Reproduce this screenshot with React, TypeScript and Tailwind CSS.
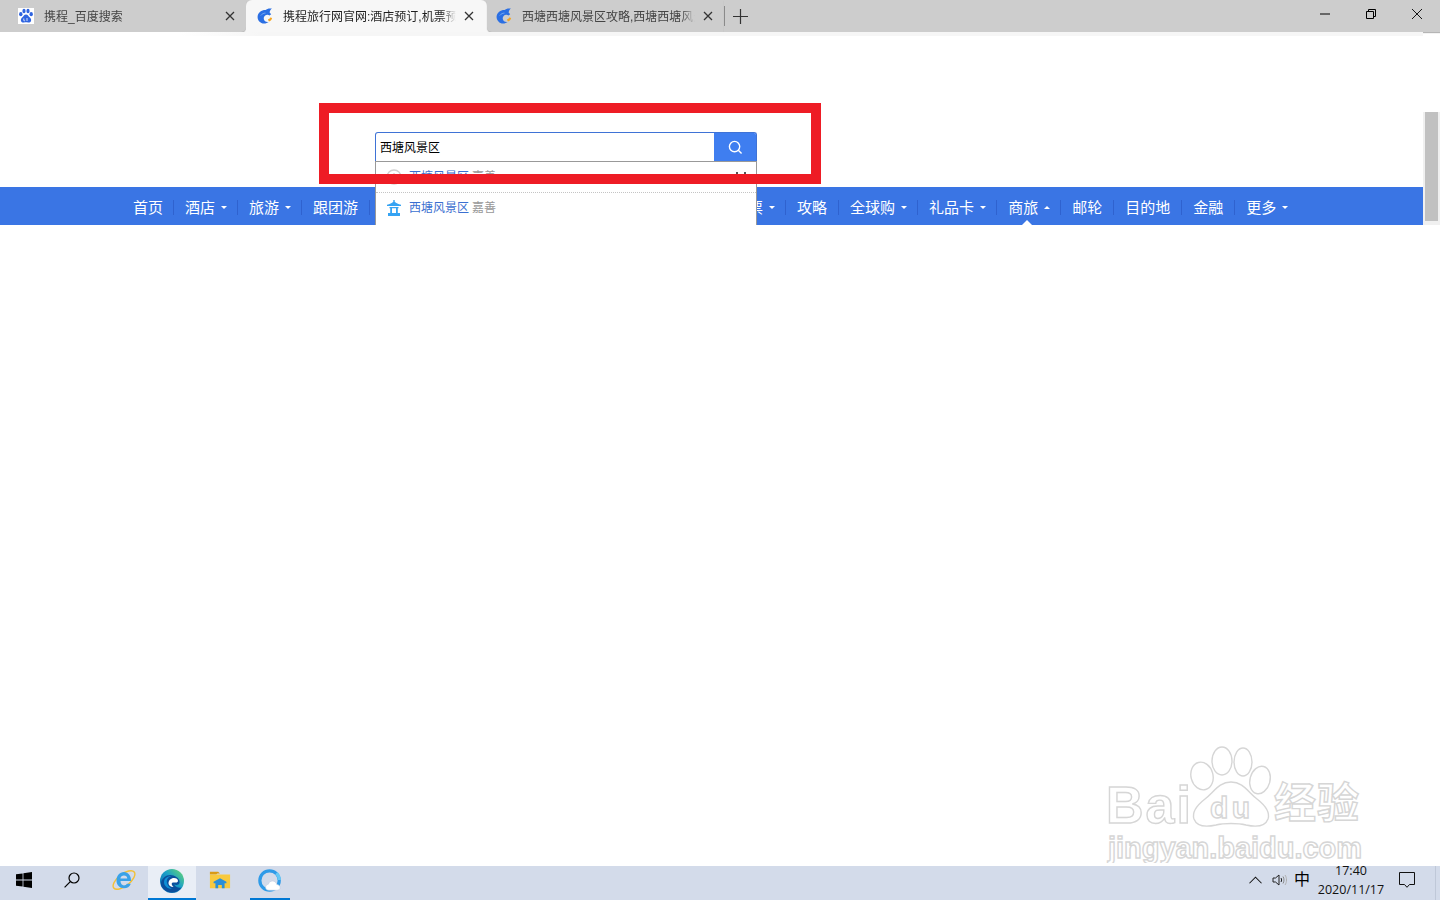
import React from "react";

const FONT = { fontFamily: '"Liberation Sans","Noto Sans CJK SC",sans-serif' };

function Paw({ className }: { className?: string }) {
  return (
    <svg viewBox="0 0 16 16" className={className}>
      <rect width="16" height="16" fill="#fff" />
      <g fill="#2f64e0">
        <ellipse cx="2.8" cy="6.2" rx="1.7" ry="2.1" />
        <ellipse cx="6" cy="3" rx="1.6" ry="2.2" />
        <ellipse cx="10" cy="3" rx="1.6" ry="2.2" />
        <ellipse cx="13.2" cy="6.2" rx="1.7" ry="2.1" />
        <path d="M8 6.5c-2 0-2.4 1.8-3.6 2.8C3.2 10.3 2.5 11.5 3 13c.5 1.4 2 1.8 3 1.5 1.3-.3 2.700-.3 4 0 1 .3 2.500-.1 3-1.500.5-1.500-.2-2.700-1.400-3.700C10.400 8.300 10 6.500 8 6.500z" />
      </g>
      <path d="M5.8 10.500v1.800c0 .8 1 .8 1 0M9 10v3" stroke="#fff" strokeWidth=".8" fill="none" />
    </svg>
  );
}

function Dolphin({ className }: { className?: string }) {
  return (
    <svg viewBox="0 0 16 16" className={className}>
      <path
        d="M15 .5C11.800.1 9.800.8 8.600 2 4.800 1.800 1 4.600.6 8.400c-.3 3.800 2.700 7 6.500 7.100 1.800 0 3.400-.6 4.500-1.500-2.600.4-4.400-.9-4.800-3-.4-2.100 1-4 3.300-4.200 1-.1 1.700.2 2.300.7l1.800-1.200-1.600-1.800c.3-1.700.9-3 2.400-4z"
        fill="#2b6fe3"
      />
      <path d="M3.800 7.500c1.200-1.600 2.800-2.400 4.700-2.400" stroke="#7fb0f5" strokeWidth=".8" fill="none" />
      <path d="M11 11.200c1.300-.2 2.200-1 2.500-2 .5.400 1 .7 1.600.8-.3 1.700-1.500 3.100-3.100 3.500-.5-.6-.9-1.400-1-2.300z" fill="#f6a623" />
    </svg>
  );
}

function X({ className }: { className?: string }) {
  return (
    <svg viewBox="0 0 10 10" className={className} fill="none" stroke="currentColor" strokeWidth="1.300">
      <path d="M1 1l8 8M9 1L1 9" />
    </svg>
  );
}

function Tab({
  title,
  icon,
  active,
  w,
  pl,
  extra,
}: {
  title: string;
  icon: React.ReactNode;
  active?: boolean;
  w: string;
  pl: string;
  extra: string;
}) {
  return (
    <div className={`flex h-full items-center ${w} ${pl} ${extra} ${active ? "text-[#1f1f1f]" : "text-[#444444]"}`}>
      <span className="mr-[10px] w-[16px] shrink-0">{icon}</span>
      <span className="w-[173px] shrink-0 overflow-hidden whitespace-nowrap pt-[1px] text-[12px] leading-[16px] [mask-image:linear-gradient(to_right,#000_92%,transparent)]">
        {title}
      </span>
      <X className="ml-[8px] h-[10px] w-[10px] shrink-0 text-[#333333]" />
    </div>
  );
}

function Item({ label, caret, up }: { label: string; caret?: boolean; up?: boolean }) {
  return (
    <div className="relative flex h-full items-center">
      <span className="mt-[2px] h-[15px] w-px bg-[#2f62cf]" />
      <span className="whitespace-nowrap pl-[11px] pt-[4px] text-[15px] leading-[20px] text-white">{label}</span>
      {caret && (
        <span
          className={`ml-[6px] mr-[-1px] mt-[2px] h-0 w-0 border-x-[3px] border-x-transparent ${
            up ? "border-b-[3px] border-b-white" : "border-t-[3px] border-t-white"
          }`}
        />
      )}
      <span className="pr-[11px]" />
      {up && (
        <span className="absolute bottom-0 left-[26px] h-0 w-0 border-x-[5px] border-b-[5px] border-x-transparent border-b-white" />
      )}
    </div>
  );
}

function Watermark() {
  const common = { fill: "#ffffff", stroke: "#d6d6d6", strokeWidth: 1.4, fontWeight: 700 };
  return (
    <svg viewBox="0 0 290 128" className="pointer-events-none absolute left-[1090px] top-[735px] z-10 h-[128px] w-[290px]">
      <text x="16" y="88" fontSize="52" fontFamily="Liberation Sans" textLength="85" {...common}>
        Bai
      </text>
      <g fill="#ffffff" stroke="#d6d6d6" strokeWidth="1.400">
        <ellipse cx="112" cy="41" rx="11" ry="14" transform="rotate(-15 112 41)" />
        <ellipse cx="132" cy="26" rx="10" ry="14" />
        <ellipse cx="153" cy="27" rx="9" ry="14" />
        <ellipse cx="170" cy="45" rx="10" ry="14" transform="rotate(15 170 45)" />
        <path d="M141 47c-12 0-17 10-26 17-9 7-13 14-11 20 3 8 13 8 22 6 8-2 22-2 30 0 9 2 19 2 22-6 2-6-2-13-11-20-9-7-14-17-26-17z" />
      </g>
      <text x="120" y="83" fontSize="30" fontFamily="Liberation Sans" textLength="40" {...common}>
        du
      </text>
      <text x="184" y="83" fontSize="42" fontFamily="Noto Sans CJK SC" textLength="85" {...common}>
        经验
      </text>
      <text x="18" y="123" fontSize="29" fontFamily="Liberation Sans" textLength="254" {...common}>
        jingyan.baidu.com
      </text>
    </svg>
  );
}

export default function App() {
  return (
    <div className="relative flex h-screen w-full flex-col overflow-hidden bg-white" style={FONT}>
      {/* browser tab bar */}
      <div className="flex h-[32px] shrink-0 bg-[linear-gradient(#cdcdcd_50%,#f7f7f7_50%)]">
        <Tab
          title="携程_百度搜索"
          w="w-[246px]"
          pl="pl-[18px]"
          extra="rounded-br-[5px] bg-[#cdcdcd] shadow-[0_1px_1px_#b5b5b5]"
          icon={<Paw className="h-[16px] w-[16px]" />}
        />
        <Tab
          active
          title="携程旅行网官网:酒店预订,机票预订查询"
          w="w-[241px]"
          pl="pl-[11px]"
          extra="rounded-t-[6px] bg-[#f7f7f7]"
          icon={<Dolphin className="h-[16px] w-[16px]" />}
        />
        <Tab
          title="西塘西塘风景区攻略,西塘西塘风景区门票"
          w="w-[237px]"
          pl="pl-[9px]"
          extra="rounded-bl-[5px] bg-[#cdcdcd] shadow-[0_1px_1px_#b5b5b5]"
          icon={<Dolphin className="h-[16px] w-[16px]" />}
        />
        <div className="flex flex-1 items-center bg-[#cdcdcd] shadow-[0_1px_1px_#b5b5b5]">
          <span className="h-[20px] w-px bg-[#8a8a8a]" />
          <svg viewBox="0 0 15 15" className="ml-[8px] h-[15px] w-[15px]" stroke="#333" strokeWidth="1.200">
            <path d="M7.500 0v15M0 7.500h15" />
          </svg>
          <div className="ml-auto flex h-full items-center pb-[4px] pr-[18px] text-black">
            <svg viewBox="0 0 10 10" className="mr-[36px] h-[10px] w-[10px]" stroke="#000" strokeWidth="1">
              <path d="M0 5h10" />
            </svg>
            <svg viewBox="0 0 10 10" className="mr-[36px] h-[10px] w-[10px]" fill="none" stroke="#000" strokeWidth="1">
              <path d="M.5 2.500h7v7h-7zM2.500 2.500V.5h7v7h-2" />
            </svg>
            <svg viewBox="0 0 10 10" className="h-[10px] w-[10px]" fill="none" stroke="#000" strokeWidth=".9">
              <path d="M0 0l10 10M10 0L0 10" />
            </svg>
          </div>
        </div>
      </div>

      {/* page */}
      <div className="flex min-h-0 flex-1">
        <div className="relative flex-1">
          <div className="h-[4px] bg-[linear-gradient(to_right,#ffffff_180px,#f6f6f6_260px)]" />
          <div className="relative h-[151px]">
            <div className="absolute left-[375px] top-[96px] z-10 w-[382px]">
              <div className="flex h-[29px] overflow-hidden rounded-t-[3px] border border-b-0 border-[#3f73d6]">
                <div className="flex-1 pl-[4px] text-[12px] leading-[30px] text-black">西塘风景区</div>
                <div className="flex w-[42px] items-center justify-center bg-[#3f7ef0]">
                  <svg viewBox="0 0 16 16" className="h-[15px] w-[15px]" fill="none" stroke="#fff" strokeWidth="1.500">
                    <circle cx="7" cy="7" r="5.500" />
                    <path d="M11 11l3.500 3.500" />
                  </svg>
                </div>
              </div>
              <div className="h-[64px] border border-b-0 border-[#999999] bg-white">
                <div className="flex h-[31px] items-center border-b border-dotted border-[#c4c4c4] pl-[10px] pr-[10px]">
                  <svg viewBox="0 0 16 16" className="mr-[7px] h-[16px] w-[16px]" fill="none" stroke="#cfcfcf" strokeWidth="1.300">
                    <circle cx="8" cy="8" r="7" />
                    <path d="M8 4v4" />
                  </svg>
                  <span className="text-[12px] text-[#3b6fd0]">西塘风景区</span>
                  <span className="ml-[3px] text-[12px] text-[#999999]">嘉善</span>
                  <span className="ml-auto flex -translate-y-[1px] gap-[6px]">
                    <span className="h-[8px] w-[2px] bg-[#555555]" />
                    <span className="h-[8px] w-[2px] bg-[#555555]" />
                  </span>
                </div>
                <div className="flex h-[32px] items-center pb-[3px] pl-[10px]">
                  <svg viewBox="0 0 16 16" className="mr-[7px] h-[16px] w-[16px]" fill="#35a3f3">
                    <path d="M7.300 0h1.400v1.800c1.500 1.400 3.500 2.400 6.300 2.900v1.300H1V4.700c2.800-.5 4.800-1.500 6.300-2.900z" />
                    <path d="M3.500 7h9v1.300h-.7V13H14v3H2v-3h2.200V8.300h-.7zM6 8.300V13h4V8.300z" />
                  </svg>
                  <span className="text-[12px] text-[#3b6fd0]">西塘风景区</span>
                  <span className="ml-[3px] text-[12px] text-[#999999]">嘉善</span>
                </div>
              </div>
            </div>
          </div>
          <nav className="flex h-[38px] items-center bg-[#3a75e4] pl-[122px]">
            <span className="whitespace-nowrap pl-[11px] pr-[10px] pt-[4px] text-[15px] leading-[20px] text-white">首页</span>
            <Item label="酒店" caret />
            <Item label="旅游" caret />
            <Item label="跟团游" />
            <div className="flex h-full w-[352px] items-center">
              <span className="mt-[2px] h-[15px] w-px bg-[#2f62cf]" />
            </div>
            <Item label="门票" caret />
            <Item label="攻略" />
            <Item label="全球购" caret />
            <Item label="礼品卡" caret />
            <Item label="商旅" caret up />
            <Item label="邮轮" />
            <Item label="目的地" />
            <Item label="金融" />
            <Item label="更多" caret />
          </nav>
        </div>
        <aside className="w-[17px] shrink-0 pt-[80px]">
          <div className="h-[113px] bg-[#f0f0f0] px-[2px]">
            <div className="h-[109px] bg-[#c1c1c1]" />
          </div>
        </aside>
      </div>

      {/* taskbar */}
      <footer className="flex h-[34px] shrink-0 items-center bg-[#d3dbea] text-[#111111]">
        <div className="flex h-full w-[48px] items-center justify-center pb-[6px]">
          <svg viewBox="0 0 16 16" className="h-[16px] w-[16px]" fill="#000">
            <path d="M0 2.300l6.600-.9v6.200H0zM7.400 1.300L16 0v7.600H7.400zM0 8.400h6.600v6.200L0 13.700zM7.400 8.400H16V16l-8.600-1.300z" />
          </svg>
        </div>
        <div className="flex h-full w-[48px] items-center justify-center pb-[6px]">
          <svg viewBox="0 0 16 16" className="h-[16px] w-[16px]" fill="none" stroke="#000" strokeWidth="1.200">
            <circle cx="10" cy="6" r="5" />
            <path d="M6.300 9.700L.6 15.400" />
          </svg>
        </div>
        <div className="ml-[4px] flex h-full w-[48px] items-center justify-center pb-[6px] pr-[1px]">
          <svg viewBox="0 0 24 24" className="h-[24px] w-[24px]" fill="none">
            <ellipse cx="12" cy="12" rx="13" ry="6" transform="rotate(-38 12 12)" stroke="#f2c037" strokeWidth="1.400" />
            <path
              d="M4.500 13h14.500C19.300 7.500 16 4 12 4 7.500 4 4.500 7.800 4.500 12.500c0 4.600 3.200 7.700 7.500 7.700 3.200 0 5.700-1.500 6.800-4.500h-3.900c-.6 1.100-1.600 1.700-2.900 1.700-2 0-3.500-1.700-3.500-4.400zm3.900-2.600c.2-1.700 1.700-3 3.600-3s3.200 1.200 3.300 3z"
              fill="#39a2e8"
              fillRule="evenodd"
            />
          </svg>
        </div>
        <div className="flex h-full w-[48px] items-center justify-center bg-[#e9eef6] pb-[4px] shadow-[inset_0_-2px_0_#0078d4]">
          <svg viewBox="0 0 24 24" className="h-[24px] w-[24px]">
            <defs>
              <linearGradient id="edgeA" x1="0" y1="1" x2="1" y2="0">
                <stop offset="0" stopColor="#0a5fb0" />
                <stop offset=".55" stopColor="#1aa0c8" />
                <stop offset="1" stopColor="#6fdc6a" />
              </linearGradient>
            </defs>
            <circle cx="12" cy="12" r="12" fill="url(#edgeA)" />
            <path d="M1 14C2 8 8 4.500 13.500 6.500 18 8 20 11 19.500 14c-.5 2-3 2.500-5.500 1.500 2 3 5 3.800 7.500 3-2.300 3.500-6 5.300-10 5-6-.5-11-5-10.500-9.500z" fill="#0b4f9c" />
            <path d="M8.500 14.500c0-3.200 2.500-5.500 5.500-5.500 2.300 0 4 1.300 4 3 0 .9-.8 1.500-2.200 1.500-1.700 0-3-.3-3.800.6-.7.9-.2 2.600 1.500 3.800-2.800 0-5-1.400-5-3.400z" fill="#ffffff" />
            <path d="M4 13c0-3.500 3.500-6 7.500-6-3.700 1-5.300 3.800-4.500 7 .5 2.600 2.500 4.800 5 5.800C7.500 20 4 17 4 13z" fill="#0f8fd6" />
          </svg>
        </div>
        <div className="flex h-full w-[48px] items-center justify-center pb-[6px]">
          <svg viewBox="0 0 24 20" className="h-[20px] w-[22px]">
            <path d="M1 1h9l2 2h-3L8 4H1z" fill="#d99a16" />
            <path d="M1 4h22v15H1z" fill="#f8c93e" />
            <path d="M12 8l-7 4v1.500h2V19h3v-3.500h4V19h3v-5.500h2V12z" fill="#2a8fd8" />
          </svg>
        </div>
        <div className="relative ml-[2px] flex h-full w-[48px] items-center justify-center pb-[4px]">
          <svg viewBox="0 0 26 26" className="h-[24px] w-[24px]">
            <circle cx="12.500" cy="12.500" r="10.500" fill="none" stroke="#2f9be8" strokeWidth="3.500" />
            <path d="M20 4.500A10.500 10.500 0 0 1 23 12" fill="none" stroke="#66c8f5" strokeWidth="3.500" />
            <path d="M12 23c-2.500 0-3.800-1.500-3.800-3.300 0-1.700 1.300-3 3-3.200.6-2.200 2.400-3.500 4.500-3.500 2.400 0 4.200 1.600 4.600 3.700 2.100.2 3.700 1.600 3.700 3.300 0 1.900-1.500 3-3.500 3z" fill="#ffffff" stroke="#b9c6dc" strokeWidth=".6" />
          </svg>
          <span className="absolute bottom-0 left-[4px] right-[4px] h-[2px] bg-[#0078d4]" />
        </div>
        <div className="ml-auto flex h-full items-center">
          <div className="flex h-full items-center pb-[6px]">
            <svg viewBox="0 0 14 8" className="mr-[10px] h-[8px] w-[13px]" fill="none" stroke="#111" strokeWidth="1.100">
              <path d="M.5 7.500L7 1l6.500 6.500" />
            </svg>
            <svg viewBox="0 0 16 16" className="mr-[6px] h-[16px] w-[16px]" fill="none" stroke="#222" strokeWidth="1">
              <path d="M1 6h2.500L7 3v10l-3.500-3H1z" />
              <path d="M9 6c.8 1.200.8 2.800 0 4" />
              <path d="M11 4.500c1.300 2 1.300 5 0 7" stroke="#888" />
              <path d="M13 3c2 2.800 2 7.200 0 10" stroke="#b0b0b0" />
            </svg>
            <span className="mr-[7px] w-[16px] text-[16px] leading-[20px] text-black">中</span>
            <div className="flex w-[68px] flex-col items-center text-[12.5px] leading-[19px] [font-family:'Open_Sans']">
              <span>17:40</span>
              <span>2020/11/17</span>
            </div>
            <svg viewBox="0 0 16 16" className="ml-[14px] h-[16px] w-[16px]" fill="none" stroke="#111" strokeWidth="1">
              <path d="M.5.5h15v12h-5L8 15.300 5.500 12.500h-5z" />
            </svg>
          </div>
          <span className="ml-[20px] h-full w-px bg-[#bfc8d8]" />
          <span className="w-[4px]" />
        </div>
      </footer>

      {/* annotation frame and watermark */}
      <div className="pointer-events-none absolute left-[319px] top-[103px] z-20 h-[81px] w-[502px] border-[10px] border-[#ee1c25]" />
      <Watermark />
    </div>
  );
}
